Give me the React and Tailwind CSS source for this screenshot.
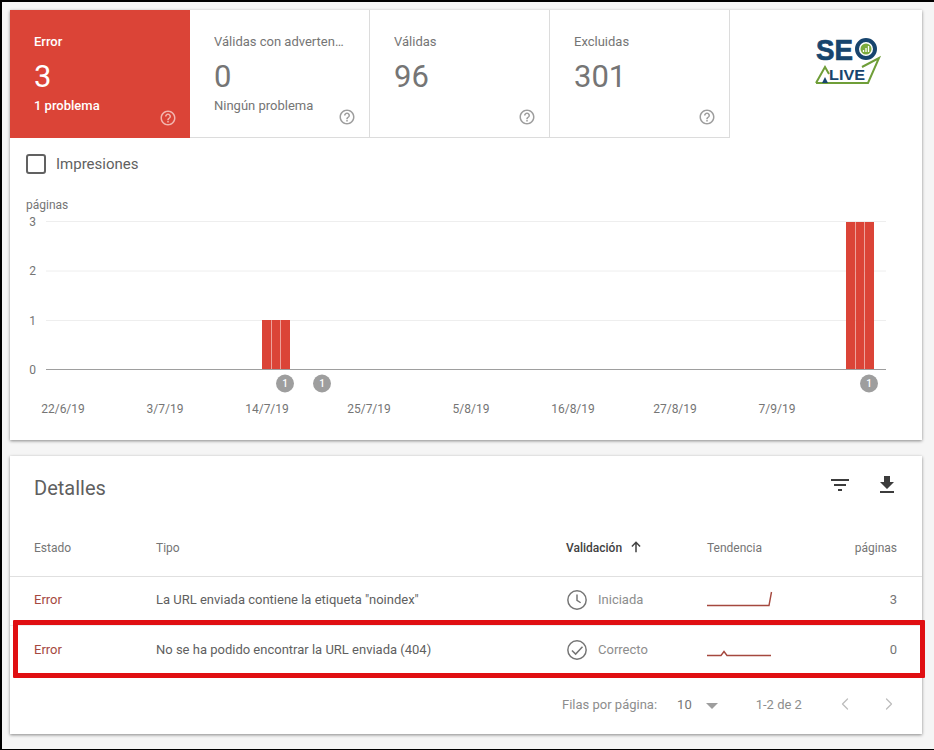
import React from 'react';
import { ChevronLeft, ChevronRight } from 'lucide-react';

const dates = ['22/6/19', '3/7/19', '14/7/19', '25/7/19', '5/8/19', '16/8/19', '27/8/19', '7/9/19'];

function HelpIcon({ className }) {
  return (
    <svg viewBox="0 0 24 24" className={className} fill="currentColor">
      <path d="M11 18h2v-2h-2v2zm1-16C6.48 2 2 6.48 2 12s4.48 10 10 10 10-4.48 10-10S17.52 2 12 2zm0 18c-4.41 0-8-3.59-8-8s3.59-8 8-8 8 3.59 8 8-3.59 8-8 8zm0-14c-2.21 0-4 1.79-4 4h2c0-1.1.9-2 2-2s2 .9 2 2c0 2-3 1.75-3 5h2c0-2.25 3-2.5 3-5 0-2.21-1.79-4-4-4z" />
    </svg>
  );
}

function Tile({ title, value, sub, active }) {
  return (
    <div className={`relative w-[180px] h-[128px] shrink-0 pl-[24px] pt-[24px] ${active ? 'bg-[#db4437] text-white' : 'border-r border-b border-[#dcdcdc] text-[#757575]'}`}>
      <div className={`text-[13px] leading-[16px] truncate pr-[24px] ${active ? 'font-medium' : ''}`}>{title}</div>
      <div className="text-[31px] leading-[36px] mt-[9px]">{value}</div>
      <div className={`text-[13px] leading-[16px] mt-[3px] ${active ? 'font-medium' : ''}`}>{sub}</div>
      <HelpIcon className={`absolute right-[13px] bottom-[11px] w-[18px] h-[18px] ${active ? 'text-[#f2b5ae]' : 'text-[#9e9e9e]'}`} />
    </div>
  );
}

function Logo() {
  return (
    <svg viewBox="0 0 66 50" className="w-[66px] h-[50px] overflow-visible">
      <text x="2" y="23" fontFamily="Liberation Sans" fontWeight="700" fontSize="30" fill="#17456e" stroke="#17456e" strokeWidth="0.7" textLength="37" lengthAdjust="spacingAndGlyphs">SE</text>
      <circle cx="52" cy="12" r="9" fill="none" stroke="#17456e" strokeWidth="4" />
      <circle cx="52" cy="12" r="5.5" fill="#7cab3e" />
      <path d="M49.5 15v-2M52 15v-4M54.5 15v-6" stroke="#fff" strokeWidth="1.3" />
      <path d="M2 46L11 30L15 37M2 46H54L65 21L48 30" stroke="#6f9e38" strokeWidth="2" fill="none" />
      <path d="M8 46l3-6 3 6z" fill="#17456e" />
      <text x="15" y="43" fontFamily="Liberation Sans" fontWeight="700" fontSize="15" fill="#17456e" textLength="36" lengthAdjust="spacingAndGlyphs">LIVE</text>
    </svg>
  );
}

function Chart() {
  return (
    <svg viewBox="0 0 912 190" className="w-[912px] h-[190px] block">
      {[3, 2, 1].map((n, i) => (
        <g key={n}>
          <line x1="36" x2="876" y1={11.5 + i * 49.5} y2={11.5 + i * 49.5} stroke="#eeeeee" />
          <text x="26" y={15.5 + i * 49.5} textAnchor="end" fontFamily="Roboto" fontSize="12" fill="#757575">{n}</text>
        </g>
      ))}
      <text x="26" y="163.5" textAnchor="end" fontFamily="Roboto" fontSize="12" fill="#757575">0</text>
      {[252, 261.5, 271, 836, 845.5, 855].map(x => (
        <rect key={x} x={x} y={x < 300 ? 110 : 12} width="9" height={x < 300 ? 49 : 147} fill="#db4437" />
      ))}
      <line x1="36" x2="876" y1="159.5" y2="159.5" stroke="#9e9e9e" />
      {[275, 312, 859].map(x => (
        <g key={x}>
          <circle cx={x} cy="173.5" r="9" fill="#9e9e9e" />
          <text x={x} y="177" textAnchor="middle" fontFamily="Roboto" fontSize="10" fontWeight="500" fill="#fff">1</text>
        </g>
      ))}
    </svg>
  );
}

function Row({ estado, tipo, icon, validacion, spark, count, boxed }) {
  return (
    <div className={`relative flex items-center h-[49px] text-[13px] ${boxed ? 'pb-[2px]' : 'pb-[2px] border-b border-[#eeeeee]'}`}>
      <div className="w-[146px] pl-[24px] shrink-0 text-[#a5483e]">{estado}</div>
      <div className="w-[410px] shrink-0 text-[#5f5f5f]">{tipo}</div>
      <div className="w-[141px] shrink-0 flex items-center gap-[10px] text-[#8d8d8d]">{icon}{validacion}</div>
      <div className="w-[80px] shrink-0">{spark}</div>
      <div className="flex-1 pr-[25px] text-right text-[#757575]">{count}</div>
      {boxed && <div className="absolute left-[3px] -right-[3px] -top-[6px] -bottom-[3px] border-[5px] border-[#e00f12] rounded-[1px]" />}
    </div>
  );
}

const Clock = (
  <svg viewBox="0 0 24 24" className="w-[22px] h-[22px] text-[#757575]" fill="none" stroke="currentColor" strokeWidth="1.6">
    <circle cx="12" cy="12" r="10" />
    <path d="M12 6v6.5l4 2.5" />
  </svg>
);

const Check = (
  <svg viewBox="0 0 24 24" className="w-[22px] h-[22px] text-[#757575]" fill="none" stroke="currentColor" strokeWidth="1.6">
    <circle cx="12" cy="12" r="10" />
    <path d="M6.5 12.5l4 4 7.5-8" />
  </svg>
);

export default function App() {
  return (
    <div className="w-[934px] h-[750px] bg-[#f5f5f5] border-t-2 border-l-2 border-b border-black overflow-hidden font-['Roboto',sans-serif]">
      <div className="ml-[8px] mt-[8px] w-[912px] h-[430px] bg-white shadow-[0_1px_3px_rgba(0,0,0,0.45)]">
        <div className="flex h-[128px]">
          <Tile active title="Error" value="3" sub="1 problema" />
          <Tile title="Válidas con advertencias" value="0" sub="Ningún problema" />
          <Tile title="Válidas" value="96" />
          <Tile title="Excluidas" value="301" />
          <div className="flex-1 flex justify-end pr-[42px] pt-[27px]"><Logo /></div>
        </div>
        <div className="flex items-center gap-[10px] pl-[16px] pt-[16px] text-[15px] leading-[20px] text-[#616161]">
          <div className="w-[20px] h-[20px] border-2 border-[#616161] rounded-[3px]" />
          Impresiones
        </div>
        <div className="pl-[16px] mt-[24px] -mb-[2px] text-[12px] leading-[14px] text-[#757575]">páginas</div>
        <Chart />
        <div className="grid grid-cols-[repeat(8,102px)] pl-[2px] mt-[2px] text-[12px] leading-[14px] text-[#757575] text-center">
          {dates.map(d => <div key={d}>{d}</div>)}
        </div>
      </div>
      <div className="ml-[8px] mt-[16px] w-[912px] h-[278px] bg-white shadow-[0_1px_3px_rgba(0,0,0,0.45)]">
        <div className="flex items-center justify-between h-[64px] pl-[24px] pr-[23px]">
          <div className="text-[20px] text-[#5f5f5f]">Detalles</div>
          <div className="flex items-center gap-[23px] text-[#3c3c3c] -mt-[6px]">
            <svg viewBox="0 0 24 24" className="w-[24px] h-[24px]" fill="currentColor"><path d="M10 18h4v-2h-4v2zM3 6v2h18V6H3zm3 7h12v-2H6v2z" /></svg>
            <svg viewBox="0 0 24 24" className="w-[24px] h-[24px]" fill="currentColor"><path d="M19 9h-4V3H9v6H5l7 7 7-7zM5 18v2h14v-2H5z" /></svg>
          </div>
        </div>
        <div className="flex items-center h-[57px] pb-[1px] text-[12px] text-[#757575] border-b border-[#e0e0e0]">
          <div className="w-[146px] pl-[24px] shrink-0">Estado</div>
          <div className="w-[410px] shrink-0">Tipo</div>
          <div className="w-[141px] shrink-0 flex items-center gap-[7px] font-medium text-[#424242]">
            Validación
            <svg viewBox="0 0 24 24" className="w-[14px] h-[14px] -mt-[2px]" fill="none" stroke="currentColor" strokeWidth="2.6"><path d="M12 21V4M5 11l7-7 7 7" /></svg>
          </div>
          <div className="w-[80px] shrink-0">Tendencia</div>
          <div className="flex-1 pr-[25px] text-right">páginas</div>
        </div>
        <Row estado="Error" tipo={'La URL enviada contiene la etiqueta "noindex"'} icon={Clock} validacion="Iniciada" count="3"
          spark={<svg viewBox="0 0 66 20" className="w-[66px] h-[20px]"><path d="M0 15.5H62L64.5 2" fill="none" stroke="#a5483e" strokeWidth="1.4" /></svg>} />
        <Row boxed estado="Error" tipo="No se ha podido encontrar la URL enviada (404)" icon={Check} validacion="Correcto" count="0"
          spark={<svg viewBox="0 0 66 20" className="w-[66px] h-[20px]"><path d="M0 15.5H14L17 11.5L20 15.5H64" fill="none" stroke="#a5483e" strokeWidth="1.4" /></svg>} />
        <div className="flex items-center h-[56px] pt-[3px] text-[13px] text-[#8d8d8d]">
          <div className="ml-[552px]">Filas por página:</div>
          <div className="ml-[20px] text-[#757575]">10</div>
          <svg viewBox="0 0 10 5" className="ml-[14px] mt-[3px] w-[12px] h-[6px]" fill="#9e9e9e"><path d="M0 0h10L5 5z" /></svg>
          <div className="ml-[38px]">1-2 de 2</div>
          <ChevronLeft className="ml-[33px] -mt-[2px] w-[20px] h-[20px] text-[#bdbdbd]" strokeWidth={1.5} />
          <ChevronRight className="ml-[24px] -mt-[2px] w-[20px] h-[20px] text-[#bdbdbd]" strokeWidth={1.5} />
        </div>
      </div>
    </div>
  );
}
